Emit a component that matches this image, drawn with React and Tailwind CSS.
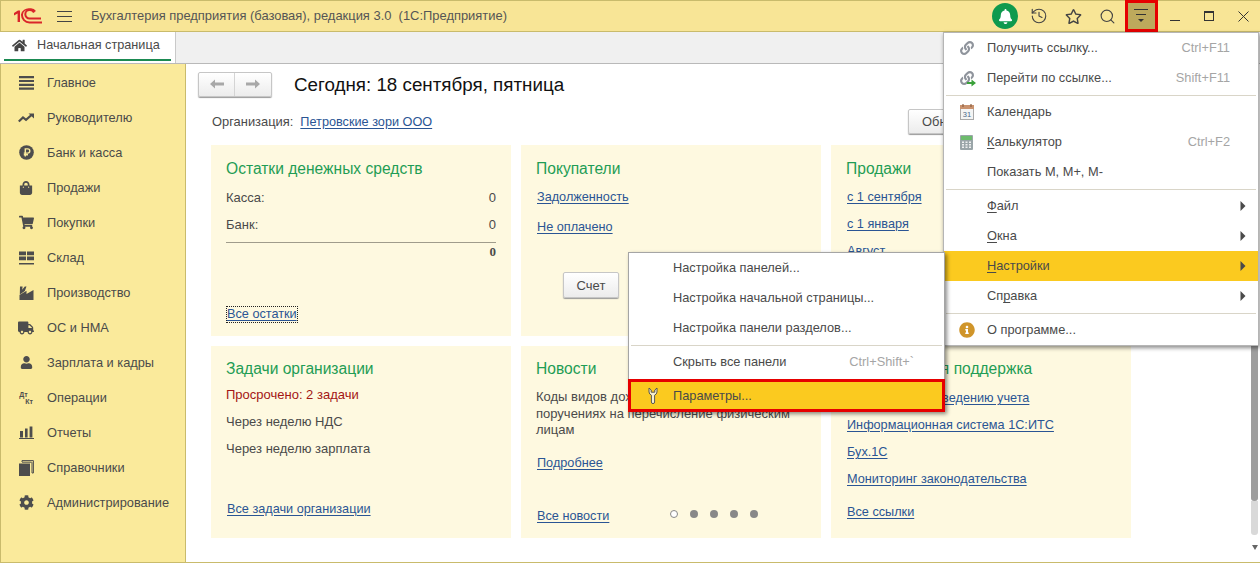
import React from "react";
import { FaShoppingBag, FaShoppingCart, FaTruck, FaUser, FaCog, FaHome, FaBell, FaRegStar, FaLink, FaInfoCircle } from "react-icons/fa";
import { History, Search } from "lucide-react";

const font = { fontFamily: '"Liberation Sans", Arial, sans-serif' };

function Logo() {
  return (
    <svg width="30" height="17" viewBox="0 0 30 17" className="shrink-0">
      <path d="M1 5 L5 2.5 H7 V14 H4.6 V5.5 L1 7.5 Z" fill="#d9262a" />
      <path d="M28 10.5 H16.5 a4.2 4.2 0 0 1 0-8.4 H17 a4.5 4.5 0 0 1 4 2.4" fill="none" stroke="#d9262a" strokeWidth="2" />
      <path d="M10 6.5 a6.5 6.5 0 0 0 6.5 7 H29 V15.5 H16.5 a8.5 8.5 0 0 1 -8.5 -9 a8 8 0 0 1 8.5 -6.2 H18 a6.5 6.5 0 0 1 5 2.6 L21.4 4 a4.5 4.5 0 0 0 -3.6 -1.7 H16.5 a4.8 4.8 0 0 0 -6.5 4.2 Z" fill="#d9262a" />
    </svg>
  );
}

const ic = "#4d4d4d";
const NavIcons = {
  main: <svg width="15" height="15" viewBox="0 0 15 15"><path d="M0 1h15v2.2H0zM0 4.9h15v2.2H0zM0 8.8h15V11H0zM0 12.6h15v2.2H0z" fill={ic} /></svg>,
  chart: <svg width="16" height="10" viewBox="0 0 16 10"><path d="M0.8 8.5 L5 4.5 L8 6.8 L13.5 2" fill="none" stroke={ic} strokeWidth="2.2" /><path d="M10.5 0.5 H16 V5.5 Z" fill={ic} /></svg>,
  ruble: <svg width="15" height="15" viewBox="0 0 15 15"><circle cx="7.5" cy="7.5" r="7.3" fill={ic} /><path d="M6.3 11.5 V3.9 H8.7 a2 2 0 0 1 0 4.2 H4.8 M4.8 9.8 H9" fill="none" stroke="#faea9b" strokeWidth="1.4" /></svg>,
  store: <svg width="15" height="14" viewBox="0 0 15 14"><path d="M0 0.5h7v3.8H0zM8 0.5h7v3.8H8zM0 5.5h7v3.8H0zM8 5.5h7v3.8H8zM0 12h15v1.4H0z" fill={ic} /></svg>,
  factory: <svg width="15" height="14" viewBox="0 0 15 14"><path d="M1 0.5h2.6L3.2 3.8 5.8 0.5H7.5L5.8 5 0.8 8.5zM0.5 14V9l7-4.2V8l7-4v10z" fill={ic} /></svg>,
  bars: <svg width="15" height="13" viewBox="0 0 15 13"><path d="M1 5h3v6.6H1zM6 2.6h2.6v9H6zM10.6 0.5h2.8v11.1h-2.8zM0 12h15v1H0z" fill={ic} /></svg>,
  books: <svg width="15" height="16" viewBox="0 0 15 16"><path d="M0 3.5h11V16H0z" fill={ic} /><path d="M3 2V0.6h11.4V13H13M12.6 2.2H3M13 2.2V13" fill="none" stroke={ic} strokeWidth="1" /></svg>,
};

const nav = [
  ["Главное", NavIcons.main],
  ["Руководителю", NavIcons.chart],
  ["Банк и касса", NavIcons.ruble],
  ["Продажи", <FaShoppingBag size={14} color={ic} />],
  ["Покупки", <FaShoppingCart size={15} color={ic} />],
  ["Склад", NavIcons.store],
  ["Производство", NavIcons.factory],
  ["ОС и НМА", <FaTruck size={16} color={ic} />],
  ["Зарплата и кадры", <FaUser size={13} color={ic} />],
  ["Операции", (
    <span className="flex flex-col text-[7px] leading-[7px] font-bold text-[#4d4d4d]">
      <span>Дт</span><span className="pl-[6px]">Кт</span>
    </span>
  )],
  ["Отчеты", NavIcons.bars],
  ["Справочники", NavIcons.books],
  ["Администрирование", <FaCog size={15} color={ic} />],
];

function Link({ children, className = "" }) {
  return <a className={"inline-block text-[#2a5594] underline underline-offset-2 text-[12.7px] leading-[15px] whitespace-nowrap " + className}>{children}</a>;
}

function Card({ title, children, className = "" }) {
  return (
    <section className={"relative bg-[#fef9e0] overflow-hidden " + className}>
      <h2 className="absolute left-[15px] top-[14px] text-[15.6px] leading-[20px] text-[#1f9d55] whitespace-nowrap">{title}</h2>
      <div className="pt-[45px] h-full flex flex-col pl-[15px] pr-[15px] leading-[15px]">{children}</div>
    </section>
  );
}

function Row({ label, value }) {
  return (
    <div className="flex justify-between h-[27px] text-[13px] text-[#4a4a4a]">
      <span>{label}</span>
      <span>{value}</span>
    </div>
  );
}

function U({ children }) {
  return <span className="underline underline-offset-2">{children}</span>;
}

function Chain({ go }) {
  return (
    <span className="relative w-[16px] h-[16px] flex items-center justify-center">
      <FaLink size={14} color="#8f949c" />
      {go && <svg width="9" height="8" viewBox="0 0 9 8" className="absolute -right-[1px] -bottom-[1px]"><path d="M0 3h4.5V0.5L9 4 4.5 7.5V5H0z" fill="#3aa13a" /></svg>}
    </span>
  );
}

function Calendar() {
  return (
    <svg width="14" height="16" viewBox="0 0 14 16">
      <rect x="0.5" y="1.5" width="13" height="14" fill="#f4f4f4" stroke="#a9a9a9" />
      <rect x="0" y="1" width="14" height="4" fill="#c9926e" />
      <path d="M3 0v3M11 0v3" stroke="#8b5f42" strokeWidth="1.2" />
      <text x="7" y="13" fontSize="7.5" textAnchor="middle" fill="#4a6a8a" style={font}>31</text>
    </svg>
  );
}

function Calc() {
  return (
    <svg width="13" height="15" viewBox="0 0 13 15">
      <rect width="13" height="15" rx="1" fill="#9aa5a8" />
      <rect x="1" y="1" width="11" height="4" fill="#6dbb6d" />
      <path d="M2 6.5h2v1.5H2zM5.5 6.5h2v1.5h-2zM9 6.5h2v1.5H9zM2 9h2v1.5H2zM5.5 9h2v1.5h-2zM9 9h2v1.5H9zM2 11.5h2V13H2zM5.5 11.5h2V13h-2zM9 11.5h2V13H9z" fill="#eef0f0" />
    </svg>
  );
}

function WrenchIcon() {
  return (
    <svg width="12" height="18" viewBox="0 0 12 18">
      <path d="M2 1 V5 a3.8 3.8 0 0 0 2.4 3.2 V15 a1.6 1.6 0 0 0 3.2 0 V8.2 a3.8 3.8 0 0 0 2.4 -3.2 V1 L7.8 3 V5.2 H4.2 V3 Z" fill="#f6efcf" stroke="#555" strokeWidth="1" strokeLinejoin="round" />
    </svg>
  );
}

function MenuRow({ icon, label, shortcut, arrow, active, h = "h-[30px]", iconW = "w-[44px]", sp = "pr-[30px]" }) {
  return (
    <div className={"relative flex items-center text-[12.8px] text-[#4a4a4a] whitespace-nowrap " + h + (active ? " bg-[#fbca1f]" : "")}>
      <span className={iconW + " flex justify-center pl-[2px] shrink-0"}>{icon}</span>
      <span className="flex-1">{label}</span>
      {shortcut && <span className={"text-[#a5a5a5] " + sp}>{shortcut}</span>}
      {arrow && <svg width="6" height="10" viewBox="0 0 6 10" className="mr-[12px]"><path d="M0.5 0 L5.5 5 L0.5 10 Z" fill="#4a4a4a" /></svg>}
    </div>
  );
}

function Sep() {
  return <div className="h-[4px] flex items-center px-[2px]"><div className="h-px w-full bg-[#d9d5c8]" /></div>;
}

function Tool({ children }) {
  return <span className="w-[34px] h-full flex items-center justify-center shrink-0">{children}</span>;
}

export default function App() {
  return (
    <div className="relative w-[1260px] h-[563px] overflow-hidden bg-white flex flex-col" style={font}>
      {/* title bar */}
      <header className="h-[32px] shrink-0 bg-[#f8e596] border-t border-l border-b border-[#c9bb6c] flex items-center pl-[12px]">
        <Logo />
        <span className="ml-[14px] flex flex-col gap-[4px] w-[15px]">
          <i className="block h-px bg-[#444]" /><i className="block h-px bg-[#444]" /><i className="block h-px bg-[#444]" />
        </span>
        <span className="ml-[19px] text-[12.93px] text-[#555] whitespace-pre">Бухгалтерия предприятия (базовая), редакция 3.0  (1С:Предприятие)</span>
        <div className="ml-auto flex items-center h-full">
          <Tool><span className="w-[26px] h-[26px] rounded-full bg-[#0f9a4e] flex items-center justify-center"><FaBell size={15} color="#fff" /></span></Tool>
          <Tool><History size={18} color="#444" strokeWidth={1.5} /></Tool>
          <Tool><FaRegStar size={17} color="#444" /></Tool>
          <Tool><Search size={17} color="#444" strokeWidth={1.6} /></Tool>
          <Tool>
            <span className="w-[33px] h-[32px] -mt-px bg-[#bda95c] border-[3px] border-[#e60000] flex flex-col items-center pt-[6px] gap-[4px] shrink-0">
              <i className="block w-[14px] h-px bg-[#333]" />
              <i className="block w-[10px] h-px bg-[#333]" />
              <i className="block border-x-[3px] border-t-[3px] border-x-transparent border-t-[#333]" />
            </span>
          </Tool>
          <Tool><span className="w-[10px] h-px bg-[#333] mt-[8px]" /></Tool>
          <Tool><span className="w-[10px] h-[10px] border border-[#333] border-t-2" /></Tool>
          <Tool>
            <svg width="11" height="11" viewBox="0 0 11 11"><path d="M0.5 0.5L10.5 10.5M10.5 0.5L0.5 10.5" stroke="#333" strokeWidth="1" /></svg>
          </Tool>
        </div>
      </header>

      {/* tabs */}
      <div className="h-[32px] shrink-0 bg-[#f0f0f0] border-b border-[#b9b9b9] flex">
        <div className="w-[176px] h-full bg-white border-r border-[#c9c9c9] px-[4px] flex flex-col">
          <div className="flex-1 flex items-center pl-[8px]">
            <FaHome size={15} color="#444" />
            <span className="ml-[10px] text-[12.7px] text-[#4a4a4a] whitespace-nowrap">Начальная страница</span>
          </div>
          <div className="h-[2px] mb-[2px] bg-[#1b8a52]" />
        </div>
      </div>

      <div className="flex-1 flex min-h-0">
        {/* sidebar */}
        <aside className="w-[186px] shrink-0 bg-[#faea9b] border-l border-r border-b border-[#c9bb6c] pt-[1px]">
          {nav.map(([label, icon]) => (
            <div key={label} className="h-[35px] flex items-center text-[12.8px] text-[#4a4a4a]">
              <span className="w-[16px] ml-[17px] flex justify-center shrink-0">{icon}</span>
              <span className="ml-[13px]">{label}</span>
            </div>
          ))}
        </aside>

        {/* main */}
        <main className="relative flex-1 min-w-0 border-b border-[#c9bb6c] pl-[25px]">
          <div className="flex items-center h-[40px] -ml-[13px]">
            <div className="w-[74px] h-[25px] flex rounded-[2px] border border-[#c6c6c6] bg-gradient-to-b from-white to-[#ececec] shadow-[0_1px_1px_#999]">
              <span className="w-[37px] border-r border-[#d4d4d4] flex items-center justify-center">
                <svg width="14" height="10" viewBox="0 0 14 10"><path d="M0 5L5 0.5V3.6H14V6.4H5V9.5Z" fill="#a8a8a8" /></svg>
              </span>
              <span className="w-[37px] flex items-center justify-center">
                <svg width="14" height="10" viewBox="0 0 14 10"><path d="M14 5L9 0.5V3.6H0V6.4H9V9.5Z" fill="#a8a8a8" /></svg>
              </span>
            </div>
            <h1 className="ml-[22px] text-[18.8px] leading-[24px] mt-[2px] text-[#111] whitespace-nowrap">Сегодня: 18 сентября, пятница</h1>
          </div>
          <div className="flex items-center h-[36px] text-[12.9px] text-[#4a4a4a] relative">
            <span className="ml-px">Организация:</span>
            <Link className="ml-[7px]">Петровские зори ООО</Link>
            <span className="absolute left-[697px] top-[5px] h-[25px] w-[60px] pl-[13px] flex items-center border border-[#c6c6c6] rounded-[2px] bg-gradient-to-b from-white to-[#ececec] shadow-[0_1px_1px_#999]">Обн</span>
          </div>

          <div className="grid grid-cols-[300px_300px_300px] grid-rows-[191px_192px] gap-[10px] mt-[5px]">
            <Card title="Остатки денежных средств">
              <div>
                <Row label="Касса:" value="0" />
                <Row label="Банк:" value="0" />
                <div className="h-px bg-[#a09c8c] -mt-[2px] mb-[1px]" />
                <div className="text-right text-[13px] font-bold text-[#4a4a4a]" style={{ fontFamily: '"Liberation Serif", serif' }}>0</div>
              </div>
              <div className="mt-auto mb-[14px] pl-px">
                <a className="inline-block text-[#2a5594] underline underline-offset-2 text-[12.7px] leading-[15px] outline-1 outline-dotted outline-[#222]">Все остатки</a>
              </div>
            </Card>
            <Card title="Покупатели">
              <div className="flex flex-col gap-[14px] pl-px items-start pb-px">
                <Link>Задолженность</Link>
                <Link className="mt-px">Не оплачено</Link>
              </div>
              <button className="ml-[27px] mt-[36px] w-[56px] h-[26px] shrink-0 text-[13px] text-[#4a4a4a] border border-[#c6c6c6] rounded-[2px] bg-gradient-to-b from-white to-[#ececec] shadow-[0_1px_1px_#999]">Счет</button>
            </Card>
            <Card title="Продажи">
              <div className="flex flex-col gap-[12px] pl-px items-start">
                <Link>с 1 сентября</Link>
                <Link>с 1 января</Link>
                <Link>Август</Link>
              </div>
            </Card>

            <Card title="Задачи организации" className="[&>h2]:top-[13px]">
              <div className="text-[13px] leading-[15px] -mt-[4px] flex flex-col gap-[12px] text-[#4a4a4a]">
                <span className="text-[#a31515]">Просрочено: 2 задачи</span>
                <span>Через неделю НДС</span>
                <span>Через неделю зарплата</span>
              </div>
              <div className="mt-auto mb-[21px] pl-px"><Link>Все задачи организации</Link></div>
            </Card>
            <Card title="Новости" className="[&>h2]:top-[13px]">
              <p className="text-[13px] leading-[16.5px] text-[#4a4a4a] w-[258px] -mt-[2px]">Коды видов дохода в платежных поручениях на перечисление физическим лицам</p>
              <div className="mt-[15px] pl-px"><Link>Подробнее</Link></div>
              <div className="mt-auto mb-[14px] pl-px flex items-center relative">
                <Link>Все новости</Link>
                <span className="absolute left-[134px] top-[1px] flex gap-[12px] items-center">
                  <i className="block w-[8px] h-[8px] rounded-full bg-white border border-[#888]" />
                  <i className="block w-[8px] h-[8px] rounded-full bg-[#888]" />
                  <i className="block w-[8px] h-[8px] rounded-full bg-[#888]" />
                  <i className="block w-[8px] h-[8px] rounded-full bg-[#888]" />
                  <i className="block w-[8px] h-[8px] rounded-full bg-[#888]" />
                </span>
              </div>
            </Card>
            <Card title="Методическая поддержка" className="[&>h2]:top-[13px]">
              <div className="flex flex-col gap-[12px] pl-px items-start">
                <Link>Руководство по ведению учета</Link>
                <Link>Информационная система 1С:ИТС</Link>
                <Link>Бух.1С</Link>
                <Link>Мониторинг законодательства</Link>
              </div>
              <div className="mt-[16px] pl-px"><Link>Все ссылки</Link></div>
            </Card>
          </div>

          {/* scrollbar */}
          <div className="absolute right-[2px] top-[0px] bottom-[1px] w-[7px] flex flex-col">
            <div className="h-[437px] bg-[#9e9e9e] rounded-b-[3px]" />
            <div className="h-[34px] bg-[#d9d9d9] rounded-b-[3px]" />
            <svg width="6" height="5" viewBox="0 0 6 5" className="mt-[10px] mx-auto"><path d="M0 0h6L3 5z" fill="#666" /></svg>
          </div>
        </main>
      </div>

      {/* main menu */}
      <div className="absolute left-[943px] top-[32px] w-[316px] h-[314px] bg-white border border-[#b5b5b5] shadow-[1px_2px_4px_rgba(0,0,0,0.45)]">
        <MenuRow iconW="w-[43px]" sp="pr-[28px]" icon={<Chain />} label="Получить ссылку..." shortcut="Ctrl+F11" />
        <MenuRow iconW="w-[43px]" sp="pr-[28px]" icon={<Chain go />} label="Перейти по ссылке..." shortcut="Shift+F11" />
        <Sep />
        <MenuRow iconW="w-[43px]" icon={<Calendar />} label="Календарь" />
        <MenuRow iconW="w-[43px]" sp="pr-[28px]" icon={<Calc />} label={<><U>К</U>алькулятор</>} shortcut="Ctrl+F2" />
        <MenuRow iconW="w-[43px]" label="Показать M, M+, M-" />
        <Sep />
        <MenuRow iconW="w-[43px]" label={<><U>Ф</U>айл</>} arrow />
        <MenuRow iconW="w-[43px]" label={<><U>О</U>кна</>} arrow />
        <MenuRow iconW="w-[43px]" label={<><U>Н</U>астройки</>} arrow active />
        <MenuRow iconW="w-[43px]" label={<>Сп<U>р</U>авка</>} arrow />
        <Sep />
        <MenuRow iconW="w-[43px]" icon={<FaInfoCircle size={16} color="#d0952a" />} label="О программе..." />
      </div>

      {/* submenu */}
      <div className="absolute left-[628px] top-[252px] w-[317px] bg-white border border-[#a5a5a5] shadow-[2px_2px_4px_rgba(0,0,0,0.45)]">
        <MenuRow label="Настройка панелей..." />
        <MenuRow label="Настройка начальной страницы..." />
        <MenuRow label="Настройка панели разделов..." />
        <Sep />
        <MenuRow label="Скрыть все панели" shortcut="Ctrl+Shift+`" />
        <div className="h-[2px]" />
        <div className="-mx-px border-[3px] border-[#e60000] -mb-px">
          <MenuRow iconW="w-[42px]" icon={<WrenchIcon />} label="Параметры..." active h="h-[27px]" />
        </div>
      </div>
    </div>
  );
}
